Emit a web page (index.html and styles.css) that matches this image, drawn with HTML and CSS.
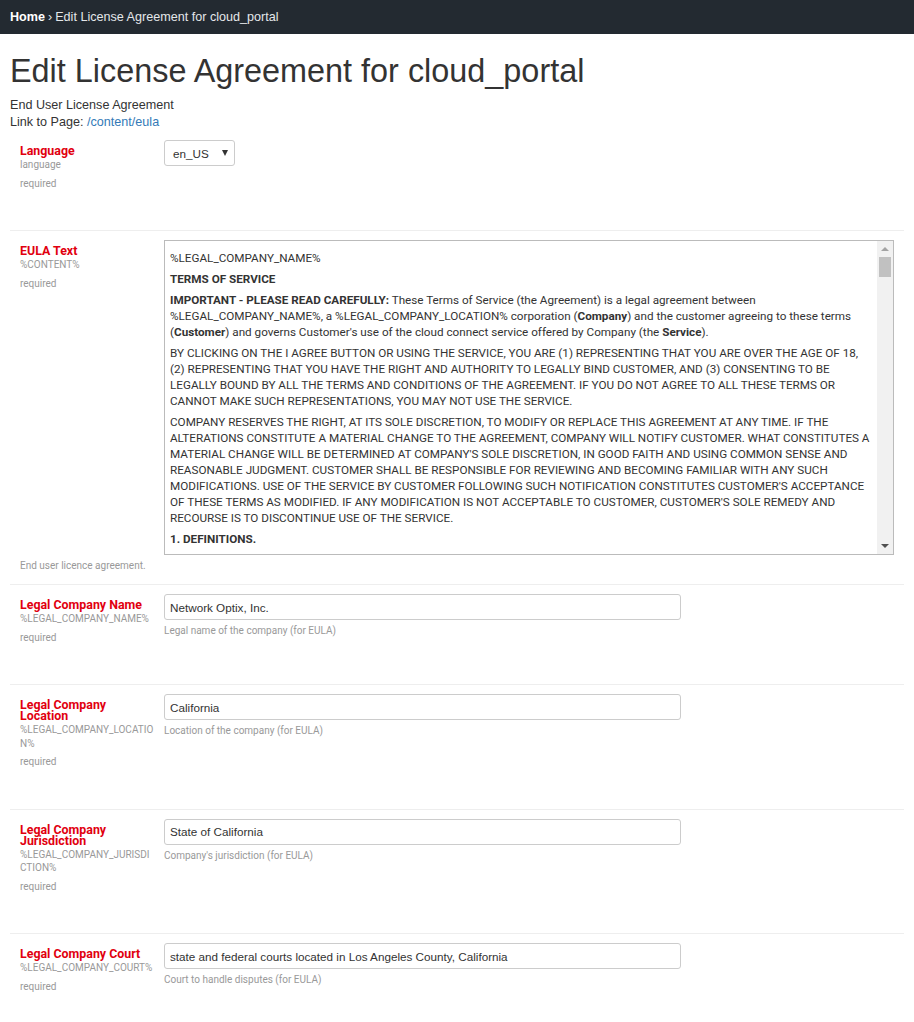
FILE: index.html
```html
<!DOCTYPE html>
<html lang="en">
<head>
<meta charset="utf-8">
<title>Edit License Agreement for cloud_portal</title>
<link rel="stylesheet" href="styles.css">
</head>
<body>
<nav class="topbar">
  <a class="crumb-home" href="#">Home</a>
  <span class="crumb-sep">›</span>
  <span class="crumb-current">Edit License Agreement for cloud_portal</span>
</nav>
<main class="page">
  <h1 class="title">Edit License Agreement for cloud_portal</h1>
  <div class="intro">
    <div>End User License Agreement</div>
    <div>Link to Page: <a class="link" href="#">/content/eula</a></div>
  </div>

  <form class="form">
    <div class="field field-first">
      <div class="field-row">
        <div class="label-col">
          <div class="label">Language</div>
          <div class="code">language</div>
          <div class="req">required</div>
        </div>
        <div class="control-col">
          <div class="select"><span>en_US</span><span class="select-arrow"></span></div>
        </div>
      </div>
    </div>

    <div class="field field-eula">
      <div class="field-row">
        <div class="label-col">
          <div class="label">EULA Text</div>
          <div class="code">%CONTENT%</div>
          <div class="req">required</div>
        </div>
        <div class="control-col">
          <div class="eula">
            <div class="eula-text">
              <p>%LEGAL_COMPANY_NAME%</p>
              <p><b>TERMS OF SERVICE</b></p>
              <p><b>IMPORTANT - PLEASE READ CAREFULLY:</b> These Terms of Service (the Agreement) is a legal agreement between<br>%LEGAL_COMPANY_NAME%, a %LEGAL_COMPANY_LOCATION% corporation (<b>Company</b>) and the customer agreeing to these terms<br>(<b>Customer</b>) and governs Customer's use of the cloud connect service offered by Company (the <b>Service</b>).</p>
              <p>BY CLICKING ON THE I AGREE BUTTON OR USING THE SERVICE, YOU ARE (1) REPRESENTING THAT YOU ARE OVER THE AGE OF 18,<br>(2) REPRESENTING THAT YOU HAVE THE RIGHT AND AUTHORITY TO LEGALLY BIND CUSTOMER, AND (3) CONSENTING TO BE<br>LEGALLY BOUND BY ALL THE TERMS AND CONDITIONS OF THE AGREEMENT. IF YOU DO NOT AGREE TO ALL THESE TERMS OR<br>CANNOT MAKE SUCH REPRESENTATIONS, YOU MAY NOT USE THE SERVICE.</p>
              <p>COMPANY RESERVES THE RIGHT, AT ITS SOLE DISCRETION, TO MODIFY OR REPLACE THIS AGREEMENT AT ANY TIME. IF THE<br>ALTERATIONS CONSTITUTE A MATERIAL CHANGE TO THE AGREEMENT, COMPANY WILL NOTIFY CUSTOMER. WHAT CONSTITUTES A<br>MATERIAL CHANGE WILL BE DETERMINED AT COMPANY'S SOLE DISCRETION, IN GOOD FAITH AND USING COMMON SENSE AND<br>REASONABLE JUDGMENT. CUSTOMER SHALL BE RESPONSIBLE FOR REVIEWING AND BECOMING FAMILIAR WITH ANY SUCH<br>MODIFICATIONS. USE OF THE SERVICE BY CUSTOMER FOLLOWING SUCH NOTIFICATION CONSTITUTES CUSTOMER'S ACCEPTANCE<br>OF THESE TERMS AS MODIFIED. IF ANY MODIFICATION IS NOT ACCEPTABLE TO CUSTOMER, CUSTOMER'S SOLE REMEDY AND<br>RECOURSE IS TO DISCONTINUE USE OF THE SERVICE.</p>
              <p><b>1. DEFINITIONS.</b></p>
            </div>
            <div class="scrollbar">
              <div class="sb-btn"><span class="sb-up"></span></div>
              <div class="sb-thumb"></div>
              <div class="sb-track"></div>
              <div class="sb-btn"><span class="sb-down"></span></div>
            </div>
          </div>
        </div>
      </div>
      <div class="field-note">End user licence agreement.</div>
    </div>

    <div class="field">
      <div class="field-row">
        <div class="label-col">
          <div class="label">Legal Company Name</div>
          <div class="code">%LEGAL_COMPANY_NAME%</div>
          <div class="req">required</div>
        </div>
        <div class="control-col">
          <input class="input" type="text" value="Network Optix, Inc.">
          <div class="help">Legal name of the company (for EULA)</div>
        </div>
      </div>
    </div>

    <div class="field">
      <div class="field-row">
        <div class="label-col">
          <div class="label">Legal Company Location</div>
          <div class="code">%LEGAL_COMPANY_LOCATIO<br>N%</div>
          <div class="req">required</div>
        </div>
        <div class="control-col">
          <input class="input" type="text" value="California">
          <div class="help">Location of the company (for EULA)</div>
        </div>
      </div>
    </div>

    <div class="field">
      <div class="field-row">
        <div class="label-col">
          <div class="label">Legal Company Jurisdiction</div>
          <div class="code">%LEGAL_COMPANY_JURISDI<br>CTION%</div>
          <div class="req">required</div>
        </div>
        <div class="control-col">
          <input class="input" type="text" value="State of California">
          <div class="help">Company's jurisdiction (for EULA)</div>
        </div>
      </div>
    </div>

    <div class="field">
      <div class="field-row">
        <div class="label-col">
          <div class="label">Legal Company Court</div>
          <div class="code">%LEGAL_COMPANY_COURT%</div>
          <div class="req">required</div>
        </div>
        <div class="control-col">
          <input class="input" type="text" value="state and federal courts located in Los Angeles County, California">
          <div class="help">Court to handle disputes (for EULA)</div>
        </div>
      </div>
    </div>
  </form>
</main>
</body>
</html>
```

FILE: styles.css
```css
html, body {
  margin: 0;
  padding: 0;
}

body {
  font-family: "Liberation Sans", Arial, sans-serif;
  font-size: 12.6px;
  color: #333;
  background: #fff;
}

.topbar {
  height: 34px;
  background: #232a31;
  display: flex;
  align-items: center;
  gap: 3px;
  padding: 0 10px 1px;
  box-sizing: border-box;
  font-size: 12.6px;
  color: #e4e7ea;
}

.crumb-home {
  color: #fff;
  font-weight: bold;
  text-decoration: none;
}

.crumb-sep {
  color: #e4e7ea;
}

.page {
  padding: 0 10px;
}

.title {
  font-size: 32.4px;
  font-weight: normal;
  line-height: 35px;
  margin: 20px 0 8px;
  color: #333;
}

.intro {
  line-height: 17px;
  color: #333;
}

.link {
  color: #337ab7;
  text-decoration: none;
}

.field {
  border-top: 1px solid #eee;
  padding: 9px 10px 0 10px;
}

.field-first {
  border-top: 0;
  padding-top: 9px;
}

.field-row {
  display: flex;
}

.label-col {
  width: 144px;
  flex: none;
  box-sizing: border-box;
  padding: 5px 12px 39.5px 0;
  font-family: Roboto, "Liberation Sans", sans-serif;
}

.label {
  font-weight: bold;
  font-size: 12.4px;
  line-height: 11px;
  color: #e1000f;
}

.code,
.req {
  font-size: 10px;
  color: #999;
}

.code {
  margin-top: 2px;
  line-height: 13.5px;
}

.req {
  margin-top: 5px;
  line-height: 14px;
}

.control-col {
  flex: 1;
  min-width: 0;
}

.select {
  width: 71px;
  height: 26px;
  box-sizing: border-box;
  border: 1px solid #ccc;
  border-radius: 3px;
  padding-left: 8px;
  display: flex;
  align-items: center;
  font-size: 11.7px;
  color: #333;
  background: #fff;
}

.select-arrow {
  margin-left: auto;
  margin-right: 6px;
  width: 0;
  height: 0;
  border-left: 3.5px solid transparent;
  border-right: 3.5px solid transparent;
  border-top: 6px solid #333;
}

.eula {
  display: flex;
  height: 315px;
  box-sizing: border-box;
  border: 1px solid #bbb;
}

.eula-text {
  flex: 1;
  min-width: 0;
  overflow: hidden;
  padding: 9px 5px 8px;
  font-family: Roboto, "Liberation Sans", sans-serif;
  font-size: 11.7px;
  line-height: 16px;
  color: #333;
  white-space: nowrap;
}

.eula-text p {
  margin: 0 0 5px;
}

.eula-text b {
  font-weight: bold;
}

.scrollbar {
  width: 16px;
  flex: none;
  background: #f1f1f1;
  display: flex;
  flex-direction: column;
}

.sb-btn {
  height: 16px;
  display: flex;
  align-items: center;
  justify-content: center;
}

.sb-up {
  width: 0;
  height: 0;
  border-left: 4px solid transparent;
  border-right: 4px solid transparent;
  border-bottom: 4px solid #a3a3a3;
}

.sb-down {
  width: 0;
  height: 0;
  border-left: 4px solid transparent;
  border-right: 4px solid transparent;
  border-top: 4px solid #505050;
}

.sb-thumb {
  height: 20px;
  margin: 0 2px;
  background: #c1c1c1;
}

.sb-track {
  flex: 1;
}

.field-eula .label-col {
  padding-bottom: 0;
}

.field-note {
  margin-top: 4px;
  padding-bottom: 11px;
  font-family: Roboto, "Liberation Sans", sans-serif;
  font-size: 10px;
  line-height: 14px;
  color: #999;
}

.input {
  display: block;
  width: 517px;
  height: 26px;
  box-sizing: border-box;
  border: 1px solid #ccc;
  border-radius: 3px;
  padding: 0 5px;
  margin: 0;
  font-family: "Liberation Sans", Arial, sans-serif;
  font-size: 11.7px;
  color: #333;
  background: #fff;
}

.help {
  margin-top: 4px;
  font-family: Roboto, "Liberation Sans", sans-serif;
  font-size: 10px;
  line-height: 14px;
  color: #999;
}
```
